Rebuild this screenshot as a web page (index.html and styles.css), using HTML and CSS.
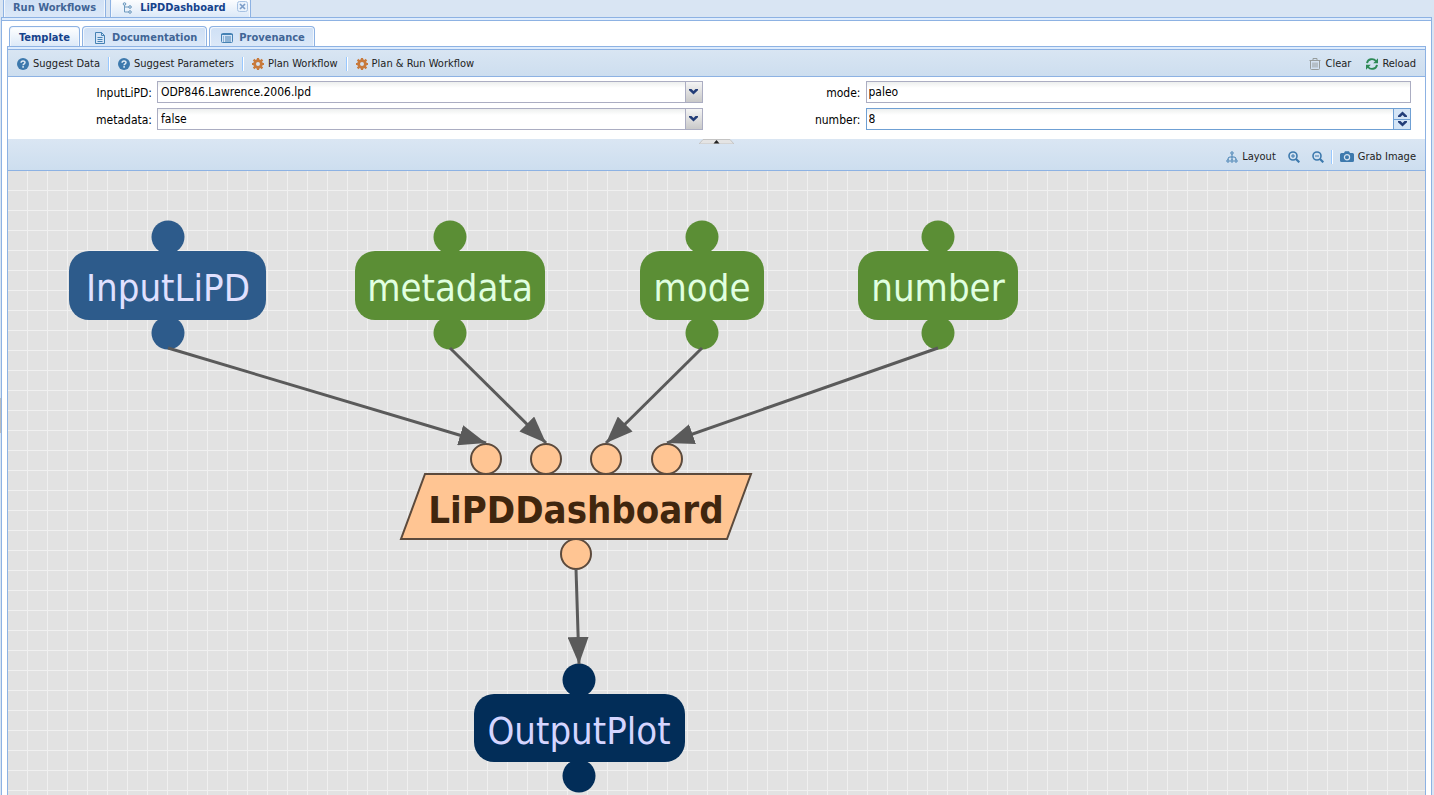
FILE: index.html
```html
<!DOCTYPE html>
<html lang="en">
<head>
<meta charset="utf-8">
<title>LiPDDashboard</title>
<link rel="stylesheet" href="styles.css">
</head>
<body>
<svg class="defs" aria-hidden="true">
  <symbol id="help" viewBox="0 0 12 12"><circle cx="6" cy="6" r="6" fill="#3d79ad"/><path d="M4.1 4.7C4.1 2.4 8 2.4 8 4.6 8 5.9 6.1 5.8 6.1 7.3" fill="none" stroke="#dfeaf5" stroke-width="1.5"/><rect x="5.3" y="8.1" width="1.6" height="1.6" fill="#dfeaf5"/></symbol>
  <symbol id="gear" viewBox="0 0 12 12"><circle cx="6" cy="6" r="3.4" fill="none" stroke="#c87a3c" stroke-width="2.8"/><path d="M6 0v2M6 10v2M0 6h2M10 6h2M1.600 1.600l1.600 1.600M8.800 8.800l1.600 1.600M1.600 10.400l1.600-1.600M8.800 3.200l1.600-1.600" stroke="#c87a3c" stroke-width="2.200"/></symbol>
  <symbol id="chevron" viewBox="0 0 9 6"><path d="M0 0h2.500l2 2 2-2H9v1.200L4.500 5.600 0 1.200z" fill="#233d78"/></symbol>
</svg>

<nav class="main-tabs">
  <button class="tab" type="button">Run Workflows</button>
  <button class="tab active closable" type="button">
    <svg class="icon" viewBox="0 0 12 12"><path d="M2.5 2v8H7M2.5 5H7" fill="none" stroke="#6c98bd"/><circle cx="2.5" cy="2" r="1.3" fill="#d5e5f4" stroke="#6c98bd"/><circle cx="8" cy="5" r="1.3" fill="#d5e5f4" stroke="#6c98bd"/><circle cx="8" cy="10" r="1.3" fill="#d5e5f4" stroke="#6c98bd"/></svg>
    LiPDDashboard
    <svg class="close" viewBox="0 0 11 11"><rect x=".5" y=".5" width="10" height="10" rx="2" fill="#e9f2fc" stroke="#a7c2e3"/><path d="M3 3l5 5M8 3l-5 5" stroke="#7c9dc8" stroke-width="1.7"/></svg>
  </button>
</nav>

<main class="workspace">
  <nav class="sub-tabs">
    <button class="tab active" type="button">Template</button>
    <button class="tab" type="button">
      <svg class="icon" viewBox="0 0 12 12"><path d="M1.5.5h6l3 3v8h-9zM7.5.5v3h3M3.5 5.5h5M3.5 7.5h5M3.5 9.5h5" fill="none" stroke="#4682b4"/></svg>
      Documentation
    </button>
    <button class="tab" type="button">
      <svg class="icon" viewBox="0 0 12 12"><rect x=".5" y="1.5" width="11" height="9" rx="1" fill="none" stroke="#4682b4"/><path d="M0 2.5h12M2 5h1M4 5h6M2 7h1M4 7h6M2 9h1M4 9h6" stroke="#4682b4"/></svg>
      Provenance
    </button>
  </nav>

  <section class="panel">
    <div class="toolbar">
      <button type="button"><svg class="icon"><use href="#help"/></svg>Suggest Data</button>
      <span class="sep"></span>
      <button type="button"><svg class="icon"><use href="#help"/></svg>Suggest Parameters</button>
      <span class="sep"></span>
      <button type="button"><svg class="icon"><use href="#gear"/></svg>Plan Workflow</button>
      <span class="sep"></span>
      <button type="button"><svg class="icon"><use href="#gear"/></svg>Plan &amp; Run Workflow</button>
      <span class="fill"></span>
      <button type="button"><svg class="icon" viewBox="0 0 12 12"><path d="M.5 2.5h11M4 2.5V.5h4v2M1.5 2.5v8q0 1 1 1h7q1 0 1-1v-8M4 4.5v5M6 4.5v5M8 4.5v5" fill="none" stroke="#969c9c"/></svg>Clear</button>
      <button type="button"><svg class="icon" viewBox="0 0 12 12"><path d="M1 5.2C1.8.6 7.5 0 10 3M11 6.8C10.2 11.4 4.500 12 2 9" fill="none" stroke="#2d8a56" stroke-width="1.9"/><path d="M12 .3v4.900H7.200zM0 11.700V6.800h4.800z" fill="#2d8a56"/></svg>Reload</button>
    </div>

    <form class="form">
      <div class="field">
        <label for="lipd">InputLiPD:</label>
        <div class="control">
          <select id="lipd"><option>ODP846.Lawrence.2006.lpd</option></select>
          <span class="trigger"><svg><use href="#chevron"/></svg></span>
        </div>
      </div>
      <div class="field">
        <label for="mode">mode:</label>
        <div class="control"><input id="mode" type="text" value="paleo"></div>
      </div>
      <div class="field">
        <label for="metadata">metadata:</label>
        <div class="control">
          <select id="metadata"><option>false</option></select>
          <span class="trigger"><svg><use href="#chevron"/></svg></span>
        </div>
      </div>
      <div class="field">
        <label for="number">number:</label>
        <div class="control focused">
          <input id="number" type="number" value="8">
          <span class="spinner">
            <button type="button" aria-label="Increase"><svg class="up"><use href="#chevron"/></svg></button>
            <button type="button" aria-label="Decrease"><svg><use href="#chevron"/></svg></button>
          </span>
        </div>
      </div>
    </form>

    <div class="toolbar graph-tools">
      <button class="collapse" type="button" aria-label="Collapse form"><svg viewBox="0 0 35 5"><path d="M0 5L4 .5h27L35 5z" fill="#e4e4e4" stroke="#c4c4c4"/><path d="M14.500 4.500L17.500 1l3 3.500z" fill="#222"/></svg></button>
      <span class="fill"></span>
      <button type="button"><svg class="icon" viewBox="0 0 12 12"><path d="M6 3v6M2 9V8q0-2 2-2h4q2 0 2 2v1" fill="none" stroke="#4681b3"/><g fill="#d5e3f1" stroke="#4681b3"><circle cx="6" cy="2" r="1.200"/><circle cx="2" cy="10" r="1.200"/><circle cx="6" cy="10" r="1.200"/><circle cx="10" cy="10" r="1.200"/></g></svg>Layout</button>
      <button type="button" aria-label="Zoom in"><svg class="icon" viewBox="0 0 12 12"><circle cx="5" cy="5" r="4" fill="none" stroke="#3d79ad" stroke-width="1.600"/><path d="M8 8l3.300 3.300" stroke="#3d79ad" stroke-width="2.200"/><path d="M3 5h4M5 3v4" stroke="#3d79ad"/></svg></button>
      <button type="button" aria-label="Zoom out"><svg class="icon" viewBox="0 0 12 12"><circle cx="5" cy="5" r="4" fill="none" stroke="#3d79ad" stroke-width="1.600"/><path d="M8 8l3.300 3.300" stroke="#3d79ad" stroke-width="2.200"/><path d="M3 5h4" stroke="#3d79ad"/></svg></button>
      <span class="sep"></span>
      <button type="button"><svg class="icon wide" viewBox="0 0 14 12"><path d="M1.500 2H4l1-1.700h4L10 2h2.500Q14 2 14 3.500v6q0 1.500-1.500 1.500h-11Q0 11 0 9.500v-6Q0 2 1.500 2z" fill="#3d79ad"/><circle cx="7" cy="6.300" r="2.600" fill="none" stroke="#d5e3f1" stroke-width="1.200"/></svg>Grab Image</button>
    </div>

    <div class="canvas">
      <svg class="graph" role="img" aria-label="Workflow graph">
        <defs>
          <marker id="arrow" markerUnits="userSpaceOnUse" markerWidth="27" markerHeight="21" refX="27" refY="10.500" orient="auto"><path d="M0 0L27 10.500 0 21z" fill="#5a5a5a"/></marker>
        </defs>
        <g class="node input">
          <circle cx="160" cy="66" r="16.500"/><circle cx="160" cy="162" r="16.500"/>
          <rect x="61" y="80" width="197" height="69" rx="20"/>
          <text x="160" y="130">InputLiPD</text>
        </g>
        <g class="node param">
          <circle cx="442" cy="66" r="16.500"/><circle cx="442" cy="162" r="16.500"/>
          <rect x="347" y="80" width="190" height="69" rx="20"/>
          <text x="442" y="130">metadata</text>
        </g>
        <g class="node param">
          <circle cx="694" cy="66" r="16.500"/><circle cx="694" cy="162" r="16.500"/>
          <rect x="632" y="80" width="124" height="69" rx="20"/>
          <text x="694" y="130">mode</text>
        </g>
        <g class="node param">
          <circle cx="930" cy="66" r="16.500"/><circle cx="930" cy="162" r="16.500"/>
          <rect x="850" y="80" width="160" height="69" rx="20"/>
          <text x="930" y="130">number</text>
        </g>
        <g class="node process">
          <circle cx="478" cy="288" r="15"/><circle cx="538" cy="288" r="15"/><circle cx="598" cy="288" r="15"/><circle cx="659" cy="288" r="15"/>
          <circle cx="568" cy="383" r="15"/>
          <path d="M417 303H743L719 368H393z"/>
          <text x="568" y="352">LiPDDashboard</text>
        </g>
        <g class="node output">
          <circle cx="571" cy="509" r="16.500"/><circle cx="571" cy="605" r="16.500"/>
          <rect x="466" y="523" width="211" height="68" rx="20"/>
          <text x="571" y="573">OutputPlot</text>
        </g>
        <g class="edges">
          <path d="M160 177L478 272"/><path d="M442 177L538 272"/><path d="M694 177L598 272"/><path d="M930 177L659 272"/><path d="M568 398L571 493"/>
        </g>
      </svg>
    </div>
  </section>
</main>
<span class="splitter"></span>
</body>
</html>
```
FILE: styles.css
```css
* { box-sizing: border-box; }
body {
  margin: 0;
  height: 100vh;
  display: flex;
  flex-direction: column;
  overflow: hidden;
  background: #d9e5f3;
  color: #222;
  font: 11px/14px Tahoma, "DejaVu Sans Condensed", "Noto Sans", sans-serif;
}
.defs { position: absolute; width: 0; height: 0; }
button { font: inherit; color: inherit; background: none; border: 0; padding: 0; margin: 0; white-space: nowrap; }
svg { display: block; }
.icon { width: 12px; height: 12px; flex: none; }
.icon.wide { width: 14px; }

/* Tab strips */
.main-tabs, .sub-tabs { display: flex; gap: 2px; }
.main-tabs { height: 17px; padding-left: 3px; align-items: flex-end; flex: none; }
.tab {
  display: flex;
  align-items: center;
  gap: 6px;
  height: 20px;
  padding: 2px 9px 0;
  border: 1px solid #8db2e3;
  border-bottom: 0;
  border-radius: 4px 4px 0 0;
  background: linear-gradient(#cfe0f5, #dbe8f8);
  box-shadow: inset 1px 1px #f2f7fd, inset -1px 0 #f2f7fd;
  color: #416596;
  font-weight: bold;
}
.sub-tabs .tab + .tab { padding-left: 11px; }
.tab.active { background: linear-gradient(#fff, #dce9f8); color: #15428b; }
.main-tabs .tab { padding-top: 1px; }
.main-tabs .tab + .tab { margin-left: 2px; }
.main-tabs .closable { padding: 1px 24px 0 11px; position: relative; }
.close { position: absolute; top: 3px; right: 2px; width: 11px; height: 11px; }

.workspace {
  flex: 1;
  min-height: 0;
  display: flex;
  flex-direction: column;
  margin: 0 2px 0 1px;
  padding: 8px 5px 0;
  border: 1px solid #8db2e3;
  border-bottom: 0;
  background: #fff;
  box-shadow: inset 0 2px #deecfd, inset 0 3px #8db2e3;
}
.sub-tabs { padding-left: 2px; flex: none; }
.panel {
  flex: 1;
  min-height: 0;
  display: flex;
  flex-direction: column;
  border: 1px solid #8db2e3;
  border-bottom: 0;
}

/* Toolbars */
.toolbar {
  display: flex;
  align-items: center;
  gap: 8px;
  height: 30px;
  padding: 4px 9px 0;
  border-bottom: 1px solid #8db2e3;
  background: linear-gradient(#dae6f3, #cddeef);
  box-shadow: inset 0 2px #deecfd, inset 0 3px #8db2e3;
  flex: none;
}
.toolbar button { display: flex; align-items: center; gap: 4px; }
.sep { width: 2px; height: 14px; background: linear-gradient(90deg, #98c8ff 50%, #fff 50%); }
.fill { flex: 1; }
.toolbar .fill ~ button + button { margin-left: 7px; }

/* Input form */
.form {
  display: grid;
  grid-template-columns: 1fr 1fr;
  row-gap: 5px;
  padding: 4px 0 9px;
  flex: none;
  font-size: 12px;
}
.field { display: flex; gap: 5px; padding-right: 14px; }
.field label { width: 144px; text-align: right; padding-top: 5px; color: #000; }
.control {
  flex: 1;
  min-width: 0;
  height: 22px;
  display: flex;
  border: 1px solid #abadc2;
  background: linear-gradient(#edefee, #fff 6px);
}
.control.focused { border-color: #6fa0d4; }
.control select, .control input {
  flex: 1;
  min-width: 0;
  appearance: none;
  border: 0;
  outline: 0;
  margin: 0;
  padding: 0 3px 1px;
  background: none;
  color: #000;
  font: inherit;
}
.control input { padding-left: 2px; }
input[type="number"] { -moz-appearance: textfield; }
input[type="number"]::-webkit-inner-spin-button { appearance: none; margin: 0; }
.trigger {
  width: 17px;
  display: flex;
  align-items: center;
  justify-content: center;
  border-left: 1px solid #abadc2;
  background: linear-gradient(#f4f4f4, #c9c9c9);
}
.trigger svg, .spinner svg { width: 9px; height: 6px; }
.spinner { width: 17px; display: flex; flex-direction: column; border-left: 1px solid #6fa0d4; }
.spinner button { flex: 1; display: flex; align-items: center; justify-content: center; background: #d5e5f6; }
.spinner button + button { border-top: 1px solid #6fa0d4; }
.up { transform: rotate(180deg); }

.graph-tools { position: relative; height: 32px; padding-top: 4px; box-shadow: none; gap: 7px; }
.toolbar.graph-tools .fill ~ button + button { margin-left: 5px; }
.collapse { position: absolute; top: 0; left: 50%; margin-left: -18px; }
.collapse svg { width: 35px; height: 5px; }

/* Workflow graph */
.canvas {
  flex: 1;
  min-height: 0;
  background-color: #e2e2e2;
  background-image: linear-gradient(90deg, transparent 19px, #f0f0f0 19px), linear-gradient(transparent 19px, #f0f0f0 19px);
  background-size: 20px 20px;
}
.graph { width: 100%; height: 100%; }
.node text { font-size: 38px; text-anchor: middle; }
.input { fill: #2d5b8b; }
.input text { fill: #e0e0ff; }
.param { fill: #5b8e35; }
.param text { fill: #e0ffe0; }
.output { fill: #022d58; }
.output text { fill: #d5d5ff; }
.process { fill: #ffc593; stroke: #5c4a3c; stroke-width: 2px; }
.process text { fill: #40260e; stroke: none; font-weight: bold; }
.edges { fill: none; stroke: #5a5a5a; stroke-width: 3px; }
.edges path { marker-end: url(#arrow); }
.splitter { position: absolute; left: 0; top: 50%; width: 1px; height: 35px; background: #bdbdbd; }
```
